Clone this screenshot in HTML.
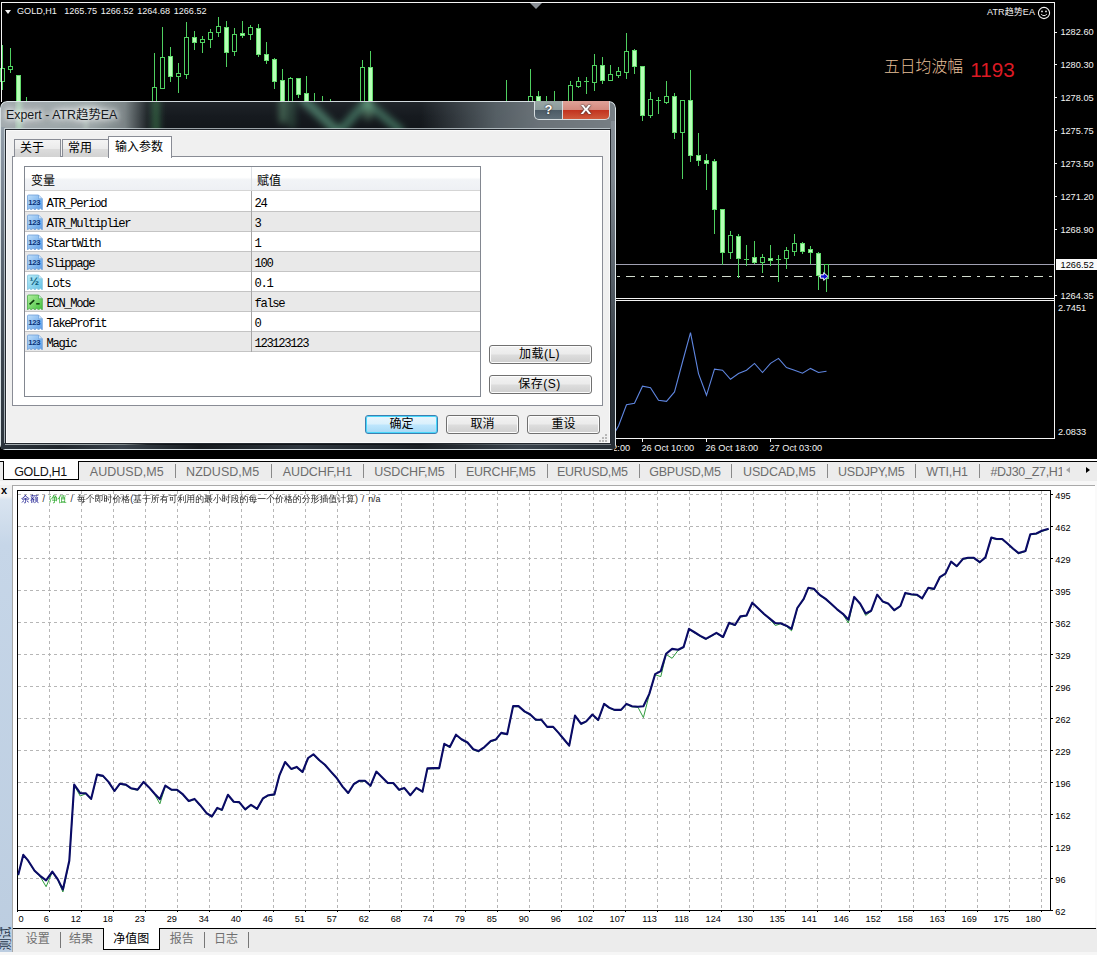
<!DOCTYPE html>
<html lang="zh"><head><meta charset="utf-8"><title>MT4</title>
<style>
html,body{margin:0;padding:0;}
body{width:1097px;height:955px;overflow:hidden;position:relative;background:#fff;
 font-family:"Liberation Sans","Noto Sans CJK SC",sans-serif;font-size:12px;color:#000;}
div,span{box-sizing:border-box;}
#top{position:absolute;left:0;top:0;width:1097px;height:459px;background:#000;overflow:hidden;}
#chart{position:absolute;left:0;top:0;}
#sym{position:absolute;left:17px;top:4.5px;color:#f2f2f2;font-size:9.1px;line-height:12px;white-space:pre;word-spacing:1.1px;}
#sym .tri{position:absolute;left:-12px;top:5px;width:0;height:0;border-left:3.5px solid transparent;border-right:3.5px solid transparent;border-top:4px solid #f2f2f2;}
#eaname{position:absolute;left:987px;top:5.8px;color:#f0f0f0;font-size:9px;line-height:13px;white-space:nowrap;letter-spacing:.1px;}
#smile{position:absolute;left:1036.6px;top:5.7px;}
#toptri{position:absolute;left:530px;top:3px;width:0;height:0;border-left:6px solid transparent;border-right:6px solid transparent;border-top:6px solid #8a8f96;}
#lab5{position:absolute;left:884px;top:56px;font-size:15.8px;line-height:20px;color:#e6bf98;white-space:nowrap;font-family:"Noto Sans CJK SC",sans-serif;font-weight:300;}
#lab1193{position:absolute;left:970.3px;top:57.8px;font-size:20.6px;line-height:24px;color:#dc1a24;white-space:nowrap;}

/* ------------------------------------------------ dialog */
#dlg{position:absolute;left:0;top:101px;width:616px;height:349px;border-radius:7px 7px 5px 5px;background:#20262b;overflow:hidden;}
#dlg .glass{position:absolute;left:0;top:0;width:616px;height:349px;border-radius:7px 7px 5px 5px;border:1px solid rgba(226,234,238,.92);
 background:
  linear-gradient(90deg,rgba(168,176,180,.97) 0px,rgba(162,172,174,.95) 90px,rgba(140,150,152,.85) 124px,rgba(60,70,72,.3) 146px,rgba(40,48,50,0) 166px),
  linear-gradient(90deg,rgba(20,24,28,0) 420px,rgba(92,102,108,.9) 495px,rgba(112,120,126,.95) 540px,rgba(124,132,138,.95) 616px),
  linear-gradient(180deg,#1f2429 0,#161a1f 14px,#12161a 28px,#12161a 349px);}
#dlg .blur{position:absolute;left:0;top:1px;}
#dlg .fl{position:absolute;left:1px;top:26px;width:4px;height:322px;background:linear-gradient(180deg,#95a0aa 0,#8893a0 30px,#5d6874 130px,#3b444e 230px,#2b333b 322px);}
#dlg .fr{position:absolute;left:611px;top:20px;width:4px;height:328px;background:linear-gradient(180deg,#868e96 0,#7d868e 60px,#59626b 150px,#343c44 240px,#262d34 328px);}
#dlg .fb{position:absolute;left:1px;top:344px;width:614px;height:4px;background:linear-gradient(90deg,#2b333b 0,#20262c 60px,#39424b 120px,#161a1e 200px,#2f373f 300px,#1a1f24 420px,#39424b 520px,#262d34 614px);}
#dlg .ttl{position:absolute;left:6px;top:6px;font-size:12.4px;line-height:16px;color:#16191c;white-space:nowrap;
 text-shadow:0 0 5px #fff,0 0 8px #fff,0 0 10px rgba(255,255,255,.9);}
#dlg .cb{position:absolute;top:0;height:19px;border:1px solid #d6dde0;border-top:none;}
#dlg .cb.help{left:534px;width:29px;border-radius:0 0 0 5px;background:linear-gradient(180deg,#9aa8a6 0,#8b9a9b 48%,#4c5b66 52%,#5f6e78 100%);}
#dlg .cb.close span{font-size:13.5px;top:0.5px;transform:scaleX(1.2);}
#dlg .cb.close{left:562px;width:48px;border-radius:0 0 5px 0;background:linear-gradient(180deg,#dfa298 0,#d48a7e 48%,#c2331f 52%,#cf5a3c 100%);}
#dlg .cb span{position:absolute;left:0;right:0;top:1px;text-align:center;color:#fff;font-weight:bold;font-size:13px;line-height:16px;
 text-shadow:0 0 2px #333,0 0 1px #222;}
#dlg .client{position:absolute;left:5px;top:28px;width:606px;height:315px;background:#f0f0f0;border:1px solid #23282e;box-shadow:inset 0 0 0 1px #fafafa,-1px -1px 0 0 rgba(214,224,228,.7);}
.cn{font-family:"Liberation Sans","Noto Sans CJK SC",sans-serif;}
.tabp{position:absolute;left:12px;top:55px;width:591px;height:250px;background:#fff;border:1px solid #898c95;}
.tab{position:absolute;top:38px;height:18px;border:1px solid #898c95;border-bottom:none;background:linear-gradient(180deg,#f4f4f4 0,#ebebeb 50%,#dcdcdc 52%,#d2d2d2 100%);
 font-size:12px;line-height:17px;text-align:left;padding-left:5px;white-space:nowrap;}
.tab.on{top:35px;height:22px;background:#fff;line-height:21px;padding-left:6px;z-index:2;}
.lv{position:absolute;left:24px;top:65px;width:457px;height:231px;background:#fff;border:1px solid #828790;overflow:hidden;}
.lv .hd{position:absolute;left:0;top:0;width:456px;height:24px;background:linear-gradient(180deg,#fff 0,#fff 45%,#f2f4f7 55%,#eef0f4 100%);border-bottom:1px solid #d5d5d5;}
.lv .hd span{position:absolute;top:5.5px;font-size:12px;line-height:16px;}
.lv .hd i{position:absolute;left:226px;top:0;width:1px;height:23px;background:#dcdfe4;}
.lv .row{position:absolute;left:0;width:456px;height:20px;border-bottom:1px solid #c4c4c4;background:#fff;}
.lv .row.g{background:#e9e9e9;}
.lv .row .n,.lv .row .v{position:absolute;top:5.2px;font-family:"Liberation Mono","DejaVu Sans Mono",monospace;font-size:12.2px;line-height:14px;letter-spacing:-1.32px;white-space:pre;color:#000;}
.lv .row .n{left:21.4px;}
.lv .row .v{left:229.4px;}
.lv .row svg{position:absolute;left:2px;top:2px;}
.lv .col{position:absolute;left:226px;top:24px;width:1px;height:161px;background:#a6a6a6;}
.btn{position:absolute;height:19px;border:1px solid #707070;border-radius:3px;background:linear-gradient(180deg,#f2f2f2 0,#ebebeb 48%,#dddddd 52%,#cfcfcf 100%);
 box-shadow:inset 0 0 0 1px #fcfcfc;font-size:12px;line-height:17px;text-align:center;white-space:nowrap;}
.btn.def{border-color:#3c7fb1;box-shadow:inset 0 0 0 1px #48d8fb;background:linear-gradient(180deg,#eaf6fd 0,#d9f0fc 48%,#bee6fd 52%,#a7d9f5 100%);}
.grip{position:absolute;left:598px;top:433px;width:10px;height:10px;}

/* ------------------------------------------------ chart tabs */
#tabs{position:absolute;left:0;top:459px;width:1097px;height:27px;background:#ececec;overflow:hidden;}
#tabs .w{position:absolute;left:0;top:0;width:1097px;height:2px;background:#fff;}
#tabs .bl{position:absolute;left:78px;top:2px;width:1019px;height:1px;background:#000;}
#tabs .bl0{position:absolute;left:0;top:2px;width:4px;height:1px;background:#000;}
#tabs .lo{position:absolute;left:0;top:22px;width:1097px;height:5px;background:#f7f7f7;}
#tabs .act{position:absolute;left:3px;top:2px;width:76px;height:19px;background:#fff;border:1px solid #000;border-top:none;}
#tabs .t{position:absolute;top:6px;font-size:12.5px;line-height:15px;color:#6c6c6c;white-space:nowrap;}
#tabs .t.on{color:#111;}
#tabs .s{position:absolute;top:5px;width:1px;height:14px;background:#8a8a8a;}
#tabs .al{position:absolute;left:1066px;top:7.5px;width:0;height:0;border-top:3.5px solid transparent;border-bottom:3.5px solid transparent;border-right:4px solid #a4a4a4;}
#tabs .ar{position:absolute;left:1085.5px;top:7.5px;width:0;height:0;border-top:3.5px solid transparent;border-bottom:3.5px solid transparent;border-left:4px solid #000;}
#tabs .clip{position:absolute;left:1062px;top:3px;width:35px;height:19px;background:#ececec;}

/* ------------------------------------------------ tester */
#tester{position:absolute;left:0;top:485px;width:1097px;height:470px;background:#fff;overflow:hidden;}
#eq{position:absolute;left:0;top:0;}
#eqtitle{position:absolute;left:21px;top:8px;font-size:8.9px;line-height:12px;white-space:nowrap;color:#222;word-spacing:1.4px;font-family:"Liberation Sans","WenQuanYi Zen Hei","Noto Sans CJK SC",sans-serif;}
#eqtitle .c1{color:#10108a;}
#eqtitle .c2{color:#18a018;}
#lstrip{position:absolute;left:0;top:0;width:13px;height:466.5px;background:linear-gradient(180deg,#f1f1f1 0,#f1f1f1 11px,#d9e4f0 15px,#c6d6e8 60px,#bccde0 470px);border-right:1px solid #a7a7a7;}
#lstrip .x{position:absolute;left:1px;top:0px;font-size:11px;line-height:11px;font-weight:bold;color:#000;font-family:"Liberation Sans",sans-serif;}
#lstrip .vt{position:absolute;left:-10.5px;top:447px;width:32px;height:13px;transform:rotate(-90deg);transform-origin:center;font-size:12px;line-height:13px;color:#26364a;white-space:nowrap;text-align:center;}
#btabs{position:absolute;left:13px;top:443px;width:1084px;height:27px;background:#ececec;}
#btabs .bl{position:absolute;left:0;top:0;width:1083px;height:1px;background:#000;}
#btabs .lo{position:absolute;left:-13px;top:23.5px;width:1097px;height:4px;background:#f6f6f6;}
#btabs .act{position:absolute;left:90px;top:0;width:57px;height:22px;background:#fff;border:1px solid #000;border-top:none;}
#btabs .t{position:absolute;top:4px;font-size:12px;line-height:15px;color:#707070;white-space:nowrap;}
#btabs .t.on{color:#000;}
#btabs .s{position:absolute;top:4px;width:1px;height:16px;background:#777;}
#rstrip{position:absolute;left:1095px;top:0;width:2px;height:443px;background:#fafafa;}

</style></head>
<body>
<div id="top">
<svg id="chart" width="1097" height="459" viewBox="0 0 1097 459" shape-rendering="crispEdges">
<rect x="2" y="264" width="1052" height="1" fill="#a0a0b2"/><line x1="2" y1="276.5" x2="1054" y2="276.5" stroke="#d2dcce" stroke-width="1" stroke-dasharray="9 6 3 6"/>
<g id="candles">
<rect x="2" y="45" width="1" height="23" fill="#4fd060"/><rect x="2" y="81" width="1" height="9" fill="#4fd060"/><rect x="0.5" y="68.5" width="4" height="13" fill="#000" stroke="#4fd060" stroke-width="1"/>
<rect x="10" y="48" width="1" height="18" fill="#4fd060"/><rect x="10" y="69" width="1" height="4" fill="#4fd060"/><rect x="8.5" y="66.5" width="4" height="3" fill="#000" stroke="#4fd060" stroke-width="1"/>
<rect x="18" y="75" width="1" height="55" fill="#4fd060"/><rect x="16.5" y="75.5" width="4" height="55" fill="#b6ffb6" stroke="#62dc6c" stroke-width="1"/>
<rect x="26" y="97" width="1" height="33" fill="#4fd060"/><rect x="154" y="53" width="1" height="34" fill="#4fd060"/><rect x="152.5" y="87.5" width="4" height="43" fill="#000" stroke="#4fd060" stroke-width="1"/>
<rect x="162" y="27" width="1" height="30" fill="#4fd060"/><rect x="162" y="88" width="1" height="1" fill="#4fd060"/><rect x="160.5" y="57.5" width="4" height="31" fill="#000" stroke="#4fd060" stroke-width="1"/>
<rect x="170" y="47" width="1" height="35" fill="#4fd060"/><rect x="168.5" y="56.5" width="4" height="20" fill="#b6ffb6" stroke="#62dc6c" stroke-width="1"/>
<rect x="178" y="63" width="1" height="10" fill="#4fd060"/><rect x="178" y="76" width="1" height="17" fill="#4fd060"/><rect x="176.5" y="73.5" width="4" height="3" fill="#000" stroke="#4fd060" stroke-width="1"/>
<rect x="186" y="22" width="1" height="15" fill="#4fd060"/><rect x="186" y="74" width="1" height="5" fill="#4fd060"/><rect x="184.5" y="37.5" width="4" height="37" fill="#000" stroke="#4fd060" stroke-width="1"/>
<rect x="194" y="31" width="1" height="19" fill="#4fd060"/><rect x="192.5" y="37.5" width="4" height="5" fill="#b6ffb6" stroke="#62dc6c" stroke-width="1"/>
<rect x="202" y="36" width="1" height="3" fill="#4fd060"/><rect x="202" y="42" width="1" height="11" fill="#4fd060"/><rect x="200.5" y="39.5" width="4" height="3" fill="#000" stroke="#4fd060" stroke-width="1"/>
<rect x="210" y="29" width="1" height="3" fill="#4fd060"/><rect x="210" y="39" width="1" height="9" fill="#4fd060"/><rect x="208.5" y="32.5" width="4" height="7" fill="#000" stroke="#4fd060" stroke-width="1"/>
<rect x="218" y="17" width="1" height="9" fill="#4fd060"/><rect x="218" y="32" width="1" height="5" fill="#4fd060"/><rect x="216.5" y="26.5" width="4" height="6" fill="#000" stroke="#4fd060" stroke-width="1"/>
<rect x="226" y="21" width="1" height="46" fill="#4fd060"/><rect x="224.5" y="27.5" width="4" height="25" fill="#b6ffb6" stroke="#62dc6c" stroke-width="1"/>
<rect x="234" y="28" width="1" height="6" fill="#4fd060"/><rect x="234" y="51" width="1" height="5" fill="#4fd060"/><rect x="232.5" y="34.5" width="4" height="17" fill="#000" stroke="#4fd060" stroke-width="1"/>
<rect x="242" y="21" width="1" height="17" fill="#4fd060"/><rect x="240.5" y="33.5" width="4" height="2" fill="#b6ffb6" stroke="#62dc6c" stroke-width="1"/>
<rect x="250" y="25" width="1" height="2" fill="#4fd060"/><rect x="250" y="34" width="1" height="6" fill="#4fd060"/><rect x="248.5" y="27.5" width="4" height="7" fill="#000" stroke="#4fd060" stroke-width="1"/>
<rect x="258" y="24" width="1" height="33" fill="#4fd060"/><rect x="256.5" y="28.5" width="4" height="26" fill="#b6ffb6" stroke="#62dc6c" stroke-width="1"/>
<rect x="266" y="42" width="1" height="22" fill="#4fd060"/><rect x="264.5" y="54.5" width="4" height="6" fill="#b6ffb6" stroke="#62dc6c" stroke-width="1"/>
<rect x="274" y="58" width="1" height="31" fill="#4fd060"/><rect x="272.5" y="59.5" width="4" height="22" fill="#b6ffb6" stroke="#62dc6c" stroke-width="1"/>
<rect x="282" y="69" width="1" height="61" fill="#4fd060"/><rect x="280.5" y="80.5" width="4" height="50" fill="#b6ffb6" stroke="#62dc6c" stroke-width="1"/>
<rect x="290" y="77" width="1" height="1" fill="#4fd060"/><rect x="288.5" y="78.5" width="4" height="52" fill="#000" stroke="#4fd060" stroke-width="1"/>
<rect x="298" y="78" width="1" height="20" fill="#4fd060"/><rect x="296.5" y="78.5" width="4" height="16" fill="#b6ffb6" stroke="#62dc6c" stroke-width="1"/>
<rect x="306" y="76" width="1" height="54" fill="#4fd060"/><rect x="304.5" y="93.5" width="4" height="37" fill="#b6ffb6" stroke="#62dc6c" stroke-width="1"/>
<rect x="314" y="93" width="1" height="37" fill="#4fd060"/><rect x="322" y="96" width="1" height="34" fill="#4fd060"/><rect x="330" y="99" width="1" height="31" fill="#4fd060"/><rect x="362" y="60" width="1" height="7" fill="#4fd060"/><rect x="360.5" y="67.5" width="4" height="63" fill="#000" stroke="#4fd060" stroke-width="1"/>
<rect x="370" y="51" width="1" height="79" fill="#4fd060"/><rect x="368.5" y="67.5" width="4" height="63" fill="#b6ffb6" stroke="#62dc6c" stroke-width="1"/>
<rect x="506" y="80" width="1" height="50" fill="#4fd060"/><rect x="530" y="69" width="1" height="27" fill="#4fd060"/><rect x="528.5" y="96.5" width="4" height="34" fill="#000" stroke="#4fd060" stroke-width="1"/>
<rect x="538" y="91" width="1" height="39" fill="#4fd060"/><rect x="536.5" y="96.5" width="4" height="34" fill="#b6ffb6" stroke="#62dc6c" stroke-width="1"/>
<rect x="546" y="96" width="1" height="34" fill="#4fd060"/><rect x="554" y="91" width="1" height="39" fill="#4fd060"/><rect x="570" y="81" width="1" height="4" fill="#4fd060"/><rect x="568.5" y="85.5" width="4" height="45" fill="#000" stroke="#4fd060" stroke-width="1"/>
<rect x="578" y="77" width="1" height="4" fill="#4fd060"/><rect x="578" y="86" width="1" height="2" fill="#4fd060"/><rect x="576.5" y="81.5" width="4" height="5" fill="#000" stroke="#4fd060" stroke-width="1"/>
<rect x="586" y="77" width="1" height="17" fill="#4fd060"/><rect x="584" y="81" width="5" height="1" fill="#4fd060"/>
<rect x="594" y="54" width="1" height="11" fill="#4fd060"/><rect x="594" y="82" width="1" height="9" fill="#4fd060"/><rect x="592.5" y="65.5" width="4" height="17" fill="#000" stroke="#4fd060" stroke-width="1"/>
<rect x="602" y="57" width="1" height="27" fill="#4fd060"/><rect x="600.5" y="65.5" width="4" height="15" fill="#b6ffb6" stroke="#62dc6c" stroke-width="1"/>
<rect x="610" y="65" width="1" height="9" fill="#4fd060"/><rect x="610" y="80" width="1" height="1" fill="#4fd060"/><rect x="608.5" y="74.5" width="4" height="6" fill="#000" stroke="#4fd060" stroke-width="1"/>
<rect x="618" y="67" width="1" height="4" fill="#4fd060"/><rect x="618" y="75" width="1" height="3" fill="#4fd060"/><rect x="616.5" y="71.5" width="4" height="4" fill="#000" stroke="#4fd060" stroke-width="1"/>
<rect x="626" y="33" width="1" height="18" fill="#4fd060"/><rect x="626" y="72" width="1" height="7" fill="#4fd060"/><rect x="624.5" y="51.5" width="4" height="21" fill="#000" stroke="#4fd060" stroke-width="1"/>
<rect x="634" y="49" width="1" height="25" fill="#4fd060"/><rect x="632.5" y="50.5" width="4" height="16" fill="#b6ffb6" stroke="#62dc6c" stroke-width="1"/>
<rect x="642" y="66" width="1" height="55" fill="#4fd060"/><rect x="640.5" y="66.5" width="4" height="49" fill="#b6ffb6" stroke="#62dc6c" stroke-width="1"/>
<rect x="650" y="92" width="1" height="7" fill="#4fd060"/><rect x="650" y="115" width="1" height="3" fill="#4fd060"/><rect x="648.5" y="99.5" width="4" height="16" fill="#000" stroke="#4fd060" stroke-width="1"/>
<rect x="658" y="97" width="1" height="17" fill="#4fd060"/><rect x="656" y="100" width="5" height="1" fill="#4fd060"/>
<rect x="666" y="81" width="1" height="15" fill="#4fd060"/><rect x="666" y="102" width="1" height="2" fill="#4fd060"/><rect x="664.5" y="96.5" width="4" height="6" fill="#000" stroke="#4fd060" stroke-width="1"/>
<rect x="674" y="93" width="1" height="46" fill="#4fd060"/><rect x="672.5" y="96.5" width="4" height="36" fill="#b6ffb6" stroke="#62dc6c" stroke-width="1"/>
<rect x="682" y="132" width="1" height="47" fill="#4fd060"/><rect x="680.5" y="100.5" width="4" height="32" fill="#000" stroke="#4fd060" stroke-width="1"/>
<rect x="690" y="70" width="1" height="92" fill="#4fd060"/><rect x="688.5" y="100.5" width="4" height="55" fill="#b6ffb6" stroke="#62dc6c" stroke-width="1"/>
<rect x="698" y="133" width="1" height="33" fill="#4fd060"/><rect x="696.5" y="155.5" width="4" height="5" fill="#b6ffb6" stroke="#62dc6c" stroke-width="1"/>
<rect x="706" y="154" width="1" height="36" fill="#4fd060"/><rect x="704.5" y="160.5" width="4" height="3" fill="#b6ffb6" stroke="#62dc6c" stroke-width="1"/>
<rect x="714" y="159" width="1" height="75" fill="#4fd060"/><rect x="712.5" y="161.5" width="4" height="48" fill="#b6ffb6" stroke="#62dc6c" stroke-width="1"/>
<rect x="722" y="209" width="1" height="56" fill="#4fd060"/><rect x="720.5" y="209.5" width="4" height="43" fill="#b6ffb6" stroke="#62dc6c" stroke-width="1"/>
<rect x="730" y="231" width="1" height="4" fill="#4fd060"/><rect x="730" y="252" width="1" height="7" fill="#4fd060"/><rect x="728.5" y="235.5" width="4" height="17" fill="#000" stroke="#4fd060" stroke-width="1"/>
<rect x="738" y="234" width="1" height="44" fill="#4fd060"/><rect x="736.5" y="236.5" width="4" height="22" fill="#b6ffb6" stroke="#62dc6c" stroke-width="1"/>
<rect x="746" y="245" width="1" height="21" fill="#4fd060"/><rect x="744" y="259" width="5" height="1" fill="#4fd060"/>
<rect x="754" y="241" width="1" height="23" fill="#4fd060"/><rect x="752.5" y="257.5" width="4" height="5" fill="#b6ffb6" stroke="#62dc6c" stroke-width="1"/>
<rect x="762" y="254" width="1" height="3" fill="#4fd060"/><rect x="762" y="262" width="1" height="11" fill="#4fd060"/><rect x="760.5" y="257.5" width="4" height="5" fill="#000" stroke="#4fd060" stroke-width="1"/>
<rect x="770" y="245" width="1" height="21" fill="#4fd060"/><rect x="768.5" y="258.5" width="4" height="2" fill="#b6ffb6" stroke="#62dc6c" stroke-width="1"/>
<rect x="778" y="255" width="1" height="27" fill="#4fd060"/><rect x="776" y="259" width="5" height="1" fill="#4fd060"/>
<rect x="786" y="247" width="1" height="3" fill="#4fd060"/><rect x="786" y="258" width="1" height="11" fill="#4fd060"/><rect x="784.5" y="250.5" width="4" height="8" fill="#000" stroke="#4fd060" stroke-width="1"/>
<rect x="794" y="234" width="1" height="9" fill="#4fd060"/><rect x="794" y="251" width="1" height="5" fill="#4fd060"/><rect x="792.5" y="243.5" width="4" height="8" fill="#000" stroke="#4fd060" stroke-width="1"/>
<rect x="802" y="242" width="1" height="12" fill="#4fd060"/><rect x="800.5" y="243.5" width="4" height="8" fill="#b6ffb6" stroke="#62dc6c" stroke-width="1"/>
<rect x="810" y="246" width="1" height="18" fill="#4fd060"/><rect x="808.5" y="249.5" width="4" height="3" fill="#b6ffb6" stroke="#62dc6c" stroke-width="1"/>
<rect x="818" y="252" width="1" height="38" fill="#4fd060"/><rect x="816.5" y="253.5" width="4" height="22" fill="#b6ffb6" stroke="#62dc6c" stroke-width="1"/>
<rect x="826" y="278" width="1" height="14" fill="#4fd060"/><rect x="824.5" y="264.5" width="4" height="14" fill="#000" stroke="#4fd060" stroke-width="1"/>
</g>
<rect x="1" y="2" width="1054" height="1" fill="#f4f4f4"/><rect x="1" y="2" width="1" height="100" fill="#f4f4f4"/><rect x="1054" y="2" width="1" height="437" fill="#f4f4f4"/><rect x="1" y="298" width="1054" height="1" fill="#f4f4f4"/><rect x="1" y="300" width="1054" height="1" fill="#f4f4f4"/><rect x="1" y="438" width="1054" height="1" fill="#f4f4f4"/>
<g shape-rendering="geometricPrecision"><path d="M820.3 274.8 h3.4 v-2.2 l4.4 3.9 -4.4 3.9 v-2.2 h-3.4z" fill="#1010d0" stroke="#fff" stroke-width="1"/></g>
<polyline points="610.5,440 618.5,426 626.5,404.8 634.5,403.2 642.5,386.2 650.5,387.8 658.5,400.3 666.5,401.4 674.5,391.9 682.5,362 690.5,332.6 698.5,373.6 706.5,395.3 714.5,369.1 722.5,370.2 730.5,379.3 738.5,373.6 746.5,370.2 754.5,363.4 762.5,372.5 770.5,363.4 778.5,358.4 786.5,367.5 794.5,370.2 802.5,373.2 810.5,368.4 818.5,372.5 826.5,371.3" fill="none" stroke="#5f86e0" stroke-width="1.1" shape-rendering="geometricPrecision"/>
<g font-family="Liberation Sans, Arial, sans-serif" font-size="9.2px" fill="#f4f4f4" shape-rendering="geometricPrecision">
<rect x="1055" y="32" width="2" height="1" fill="#f4f4f4" shape-rendering="crispEdges"/><text x="1060.4" y="35.3">1282.60</text>
<rect x="1055" y="64" width="2" height="1" fill="#f4f4f4" shape-rendering="crispEdges"/><text x="1060.4" y="68.2">1280.30</text>
<rect x="1055" y="97" width="2" height="1" fill="#f4f4f4" shape-rendering="crispEdges"/><text x="1060.4" y="101.2">1278.05</text>
<rect x="1055" y="130" width="2" height="1" fill="#f4f4f4" shape-rendering="crispEdges"/><text x="1060.4" y="134.10000000000002">1275.75</text>
<rect x="1055" y="163" width="2" height="1" fill="#f4f4f4" shape-rendering="crispEdges"/><text x="1060.4" y="167.0">1273.50</text>
<rect x="1055" y="196" width="2" height="1" fill="#f4f4f4" shape-rendering="crispEdges"/><text x="1060.4" y="200.0">1271.20</text>
<rect x="1055" y="229" width="2" height="1" fill="#f4f4f4" shape-rendering="crispEdges"/><text x="1060.4" y="232.9">1268.90</text>
<rect x="1055" y="295" width="2" height="1" fill="#f4f4f4" shape-rendering="crispEdges"/><text x="1060.4" y="298.6">1264.35</text>
<rect x="1056" y="259" width="41" height="11" fill="#fafafa" shape-rendering="crispEdges"/><text x="1060.6" y="268.3" fill="#000">1266.52</text>
<text x="1058" y="311">2.7451</text>
<text x="1058" y="434.5">2.0833</text>
<defs><clipPath id="cpt"><rect x="614" y="440" width="40" height="16"/></clipPath></defs><rect x="578" y="439" width="1" height="3" fill="#f4f4f4" shape-rendering="crispEdges"/><text x="577.5" y="450.8" clip-path="url(#cpt)">26 Oct 02:00</text>
<rect x="642" y="439" width="1" height="3" fill="#f4f4f4" shape-rendering="crispEdges"/><text x="641.5" y="450.8">26 Oct 10:00</text>
<rect x="706" y="439" width="1" height="3" fill="#f4f4f4" shape-rendering="crispEdges"/><text x="705.5" y="450.8">26 Oct 18:00</text>
<rect x="770" y="439" width="1" height="3" fill="#f4f4f4" shape-rendering="crispEdges"/><text x="769.5" y="450.8">27 Oct 03:00</text>
</g>
</svg>
<div id="sym"><span class="tri"></span>GOLD,H1&nbsp; 1265.75 1266.52 1264.68 1266.52</div>
<div id="eaname">ATR趋势EA</div>
<svg id="smile" width="14" height="14" viewBox="0 0 14 14"><circle cx="7" cy="7" r="5.6" fill="none" stroke="#f0f0f0" stroke-width="1.1"/><circle cx="5" cy="5.4" r="0.9" fill="#f0f0f0"/><circle cx="9" cy="5.4" r="0.9" fill="#f0f0f0"/><path d="M4.2 8.2 Q7 11.2 9.8 8.2" fill="none" stroke="#f0f0f0" stroke-width="1"/></svg>
<div id="toptri"></div>
<div id="lab5">五日均波幅</div><div id="lab1193">1193</div>
</div>
<div id="dlg">
<div class="glass"></div><svg class="blur" width="616" height="27" viewBox="0 0 616 27"><defs><filter id="fbl1" x="-5%" y="-60%" width="110%" height="220%"><feGaussianBlur stdDeviation="3.6"/></filter><filter id="fbl2" x="-5%" y="-60%" width="110%" height="220%"><feGaussianBlur stdDeviation="2"/></filter></defs>
<g filter="url(#fbl1)" fill="none" stroke-linecap="round">
<path d="M156 -2 V30" stroke="#58c870" stroke-width="5" opacity=".5"/>
<path d="M283 -3 V18" stroke="#8ee0a8" stroke-width="7" opacity=".4"/>
<path d="M292 -3 V24" stroke="#60b888" stroke-width="5" opacity=".35"/>
<path d="M304 -2 L336 28" stroke="#7ad0a8" stroke-width="9" opacity=".5"/>
<path d="M342 27 L366 0 L400 28" stroke="#6cc49c" stroke-width="8" opacity=".48"/>
<path d="M368 -3 V14" stroke="#a0f0b8" stroke-width="8" opacity=".35"/>
</g>
<g filter="url(#fbl2)" fill="none"><path d="M19 -2 V30" stroke="#c8ffd0" stroke-width="5" opacity=".55"/><path d="M86 4 V30" stroke="#d8f0dc" stroke-width="4" opacity=".35"/></g>
</svg><div class="fl"></div><div class="fr"></div><div class="fb"></div>
<div class="ttl">Expert - ATR趋势EA</div>
<div class="cb help"><span>?</span></div><div class="cb close"><span>X</span></div>
<div class="client"></div>
<div class="tabp"></div>
<div class="tab" style="left:14px;width:47px">关于</div><div class="tab" style="left:62px;width:47px">常用</div><div class="tab on" style="left:108px;width:64px">输入参数</div>
<div class="lv">
<div class="hd"><span style="left:6px">变量</span><i></i><span style="left:232px">赋值</span></div>
<div class="row" style="top:25px"><svg width="16" height="16" viewBox="0 0 16 16"><defs><linearGradient id="gn1" x1="0" y1="0" x2="1" y2="1"><stop offset="0" stop-color="#bfe0fb"/><stop offset="1" stop-color="#5a9be6"/></linearGradient></defs><path d="M0.5 2 Q0.5 1 1.5 1 H11.5 L15.3 4.8 V15.8 L13.4 14.3 L11.6 15.8 L9.7 14.3 L7.9 15.8 L6 14.3 L4.2 15.8 L2.4 14.3 L0.5 15.8 Z" fill="url(#gn1)" stroke="#6f9fd8" stroke-width="0.8"/><path d="M11.5 1 V4.8 H15.3" fill="#e8f4ff" fill-opacity=".7" stroke="#6f9fd8" stroke-width="0.7"/><text x="7.2" y="11.2" font-family="Liberation Sans,sans-serif" font-size="7.8" font-weight="bold" fill="#0c3478" text-anchor="middle" letter-spacing="-0.4">123</text></svg><span class="n">ATR_Period</span><span class="v">24</span></div>
<div class="row g" style="top:45px"><svg width="16" height="16" viewBox="0 0 16 16"><defs><linearGradient id="gn2" x1="0" y1="0" x2="1" y2="1"><stop offset="0" stop-color="#bfe0fb"/><stop offset="1" stop-color="#5a9be6"/></linearGradient></defs><path d="M0.5 2 Q0.5 1 1.5 1 H11.5 L15.3 4.8 V15.8 L13.4 14.3 L11.6 15.8 L9.7 14.3 L7.9 15.8 L6 14.3 L4.2 15.8 L2.4 14.3 L0.5 15.8 Z" fill="url(#gn2)" stroke="#6f9fd8" stroke-width="0.8"/><path d="M11.5 1 V4.8 H15.3" fill="#e8f4ff" fill-opacity=".7" stroke="#6f9fd8" stroke-width="0.7"/><text x="7.2" y="11.2" font-family="Liberation Sans,sans-serif" font-size="7.8" font-weight="bold" fill="#0c3478" text-anchor="middle" letter-spacing="-0.4">123</text></svg><span class="n">ATR_Multiplier</span><span class="v">3</span></div>
<div class="row" style="top:65px"><svg width="16" height="16" viewBox="0 0 16 16"><defs><linearGradient id="gn3" x1="0" y1="0" x2="1" y2="1"><stop offset="0" stop-color="#bfe0fb"/><stop offset="1" stop-color="#5a9be6"/></linearGradient></defs><path d="M0.5 2 Q0.5 1 1.5 1 H11.5 L15.3 4.8 V15.8 L13.4 14.3 L11.6 15.8 L9.7 14.3 L7.9 15.8 L6 14.3 L4.2 15.8 L2.4 14.3 L0.5 15.8 Z" fill="url(#gn3)" stroke="#6f9fd8" stroke-width="0.8"/><path d="M11.5 1 V4.8 H15.3" fill="#e8f4ff" fill-opacity=".7" stroke="#6f9fd8" stroke-width="0.7"/><text x="7.2" y="11.2" font-family="Liberation Sans,sans-serif" font-size="7.8" font-weight="bold" fill="#0c3478" text-anchor="middle" letter-spacing="-0.4">123</text></svg><span class="n">StartWith</span><span class="v">1</span></div>
<div class="row g" style="top:85px"><svg width="16" height="16" viewBox="0 0 16 16"><defs><linearGradient id="gn4" x1="0" y1="0" x2="1" y2="1"><stop offset="0" stop-color="#bfe0fb"/><stop offset="1" stop-color="#5a9be6"/></linearGradient></defs><path d="M0.5 2 Q0.5 1 1.5 1 H11.5 L15.3 4.8 V15.8 L13.4 14.3 L11.6 15.8 L9.7 14.3 L7.9 15.8 L6 14.3 L4.2 15.8 L2.4 14.3 L0.5 15.8 Z" fill="url(#gn4)" stroke="#6f9fd8" stroke-width="0.8"/><path d="M11.5 1 V4.8 H15.3" fill="#e8f4ff" fill-opacity=".7" stroke="#6f9fd8" stroke-width="0.7"/><text x="7.2" y="11.2" font-family="Liberation Sans,sans-serif" font-size="7.8" font-weight="bold" fill="#0c3478" text-anchor="middle" letter-spacing="-0.4">123</text></svg><span class="n">Slippage</span><span class="v">100</span></div>
<div class="row" style="top:105px"><svg width="16" height="16" viewBox="0 0 16 16"><defs><linearGradient id="gd" x1="0" y1="0" x2="1" y2="1"><stop offset="0" stop-color="#b8ecf8"/><stop offset="1" stop-color="#62c0e4"/></linearGradient></defs><path d="M0.5 2 Q0.5 1 1.5 1 H11.5 L15.3 4.8 V15.8 L13.4 14.3 L11.6 15.8 L9.7 14.3 L7.9 15.8 L6 14.3 L4.2 15.8 L2.4 14.3 L0.5 15.8 Z" fill="url(#gd)" stroke="#7fc0dc" stroke-width="0.8"/><path d="M11.5 1 V4.8 H15.3" fill="#e8f4ff" fill-opacity=".7" stroke="#7fc0dc" stroke-width="0.7"/><text x="7.4" y="10.6" font-family="Liberation Sans,sans-serif" font-size="11.5" font-weight="bold" fill="#0d5c7c" text-anchor="middle">½</text></svg><span class="n">Lots</span><span class="v">0.1</span></div>
<div class="row g" style="top:125px"><svg width="16" height="16" viewBox="0 0 16 16"><defs><linearGradient id="gbool" x1="0" y1="0" x2="1" y2="1"><stop offset="0" stop-color="#b4f0a0"/><stop offset="1" stop-color="#3fbf3a"/></linearGradient></defs><path d="M0.5 2 Q0.5 1 1.5 1 H11.5 L15.3 4.8 V15.8 L13.4 14.3 L11.6 15.8 L9.7 14.3 L7.9 15.8 L6 14.3 L4.2 15.8 L2.4 14.3 L0.5 15.8 Z" fill="url(#gbool)" stroke="#48a848" stroke-width="0.8"/><path d="M11.5 1 V4.8 H15.3" fill="#e8f4ff" fill-opacity=".7" stroke="#48a848" stroke-width="0.7"/><path d="M2.6 10.4 L7.2 6.2" fill="none" stroke="#0c3a0c" stroke-width="1.7"/><path d="M9.2 9.8 H12.6" fill="none" stroke="#0c3a0c" stroke-width="1.5"/></svg><span class="n">ECN_Mode</span><span class="v">false</span></div>
<div class="row" style="top:145px"><svg width="16" height="16" viewBox="0 0 16 16"><defs><linearGradient id="gn5" x1="0" y1="0" x2="1" y2="1"><stop offset="0" stop-color="#bfe0fb"/><stop offset="1" stop-color="#5a9be6"/></linearGradient></defs><path d="M0.5 2 Q0.5 1 1.5 1 H11.5 L15.3 4.8 V15.8 L13.4 14.3 L11.6 15.8 L9.7 14.3 L7.9 15.8 L6 14.3 L4.2 15.8 L2.4 14.3 L0.5 15.8 Z" fill="url(#gn5)" stroke="#6f9fd8" stroke-width="0.8"/><path d="M11.5 1 V4.8 H15.3" fill="#e8f4ff" fill-opacity=".7" stroke="#6f9fd8" stroke-width="0.7"/><text x="7.2" y="11.2" font-family="Liberation Sans,sans-serif" font-size="7.8" font-weight="bold" fill="#0c3478" text-anchor="middle" letter-spacing="-0.4">123</text></svg><span class="n">TakeProfit</span><span class="v">0</span></div>
<div class="row g" style="top:165px"><svg width="16" height="16" viewBox="0 0 16 16"><defs><linearGradient id="gn6" x1="0" y1="0" x2="1" y2="1"><stop offset="0" stop-color="#bfe0fb"/><stop offset="1" stop-color="#5a9be6"/></linearGradient></defs><path d="M0.5 2 Q0.5 1 1.5 1 H11.5 L15.3 4.8 V15.8 L13.4 14.3 L11.6 15.8 L9.7 14.3 L7.9 15.8 L6 14.3 L4.2 15.8 L2.4 14.3 L0.5 15.8 Z" fill="url(#gn6)" stroke="#6f9fd8" stroke-width="0.8"/><path d="M11.5 1 V4.8 H15.3" fill="#e8f4ff" fill-opacity=".7" stroke="#6f9fd8" stroke-width="0.7"/><text x="7.2" y="11.2" font-family="Liberation Sans,sans-serif" font-size="7.8" font-weight="bold" fill="#0c3478" text-anchor="middle" letter-spacing="-0.4">123</text></svg><span class="n">Magic</span><span class="v">123123123</span></div>
<div class="col"></div>
</div>
<div class="btn" style="left:489px;top:244px;width:103px;letter-spacing:.5px;text-indent:-2px">加载(L)</div>
<div class="btn" style="left:489px;top:274px;width:103px;letter-spacing:.5px;text-indent:-2px">保存(S)</div>
<div class="btn def" style="left:365px;top:314px;width:73px">确定</div>
<div class="btn" style="left:446px;top:314px;width:73px">取消</div>
<div class="btn" style="left:527px;top:314px;width:73px">重设</div>
<svg class="grip" style="top:332px" width="10" height="10" viewBox="0 0 10 10"><g fill="#b8b8b8"><rect x="7" y="1" width="2" height="2"/><rect x="4" y="4" width="2" height="2"/><rect x="7" y="4" width="2" height="2"/><rect x="1" y="7" width="2" height="2"/><rect x="4" y="7" width="2" height="2"/><rect x="7" y="7" width="2" height="2"/></g></svg>
</div>
<div id="tabs">
<div class="w"></div><div class="lo"></div><div class="bl0"></div><div class="bl"></div><div class="act"></div>
<div class="t on" style="left:14.2px;letter-spacing:-0.30px">GOLD,H1</div><div class="t" style="left:89.8px;letter-spacing:0.03px">AUDUSD,M5</div><div class="t" style="left:186.1px;letter-spacing:0.03px">NZDUSD,M5</div><div class="t" style="left:282.7px;letter-spacing:-0.08px">AUDCHF,H1</div><div class="t" style="left:374.2px;letter-spacing:-0.13px">USDCHF,M5</div><div class="t" style="left:465.9px;letter-spacing:-0.22px">EURCHF,M5</div><div class="t" style="left:557.0px;letter-spacing:-0.32px">EURUSD,M5</div><div class="t" style="left:649.3px;letter-spacing:-0.26px">GBPUSD,M5</div><div class="t" style="left:743.0px;letter-spacing:-0.13px">USDCAD,M5</div><div class="t" style="left:838.0px;letter-spacing:-0.24px">USDJPY,M5</div><div class="t" style="left:926.3px;letter-spacing:-0.13px">WTI,H1</div><div class="t" style="left:990.4px;letter-spacing:-0.3px">#DJ30_Z7,H1</div>
<div class="s" style="left:175px"></div><div class="s" style="left:271px"></div><div class="s" style="left:363px"></div><div class="s" style="left:455px"></div><div class="s" style="left:547px"></div><div class="s" style="left:639px"></div><div class="s" style="left:731px"></div><div class="s" style="left:827px"></div><div class="s" style="left:915px"></div><div class="s" style="left:979px"></div>
<div class="clip"></div><div class="al"></div><div class="ar"></div>
</div>
<div id="tester">
<svg id="eq" width="1097" height="470" viewBox="0 485 1097 470" shape-rendering="crispEdges">
<rect x="13" y="485" width="1083" height="1" fill="#a9a9a9"/><rect x="13" y="486" width="1084" height="443" fill="#fff"/><g stroke="#b6b6b6" stroke-width="1" stroke-dasharray="3 3">
<line x1="49.5" y1="491" x2="49.5" y2="910"/><line x1="81.5" y1="491" x2="81.5" y2="910"/><line x1="113.5" y1="491" x2="113.5" y2="910"/><line x1="145.5" y1="491" x2="145.5" y2="910"/><line x1="177.5" y1="491" x2="177.5" y2="910"/><line x1="209.5" y1="491" x2="209.5" y2="910"/><line x1="241.5" y1="491" x2="241.5" y2="910"/><line x1="273.5" y1="491" x2="273.5" y2="910"/><line x1="305.5" y1="491" x2="305.5" y2="910"/><line x1="337.5" y1="491" x2="337.5" y2="910"/><line x1="369.5" y1="491" x2="369.5" y2="910"/><line x1="401.5" y1="491" x2="401.5" y2="910"/><line x1="433.5" y1="491" x2="433.5" y2="910"/><line x1="465.5" y1="491" x2="465.5" y2="910"/><line x1="497.5" y1="491" x2="497.5" y2="910"/><line x1="529.5" y1="491" x2="529.5" y2="910"/><line x1="561.5" y1="491" x2="561.5" y2="910"/><line x1="593.5" y1="491" x2="593.5" y2="910"/><line x1="625.5" y1="491" x2="625.5" y2="910"/><line x1="657.5" y1="491" x2="657.5" y2="910"/><line x1="689.5" y1="491" x2="689.5" y2="910"/><line x1="721.5" y1="491" x2="721.5" y2="910"/><line x1="753.5" y1="491" x2="753.5" y2="910"/><line x1="785.5" y1="491" x2="785.5" y2="910"/><line x1="817.5" y1="491" x2="817.5" y2="910"/><line x1="849.5" y1="491" x2="849.5" y2="910"/><line x1="881.5" y1="491" x2="881.5" y2="910"/><line x1="913.5" y1="491" x2="913.5" y2="910"/><line x1="945.5" y1="491" x2="945.5" y2="910"/><line x1="977.5" y1="491" x2="977.5" y2="910"/><line x1="1009.5" y1="491" x2="1009.5" y2="910"/><line x1="1041.5" y1="491" x2="1041.5" y2="910"/>
<line x1="18" y1="494.5" x2="1050" y2="494.5"/><line x1="18" y1="526.5" x2="1050" y2="526.5"/><line x1="18" y1="558.5" x2="1050" y2="558.5"/><line x1="18" y1="590.5" x2="1050" y2="590.5"/><line x1="18" y1="622.5" x2="1050" y2="622.5"/><line x1="18" y1="654.5" x2="1050" y2="654.5"/><line x1="18" y1="686.5" x2="1050" y2="686.5"/><line x1="18" y1="718.5" x2="1050" y2="718.5"/><line x1="18" y1="750.5" x2="1050" y2="750.5"/><line x1="18" y1="782.5" x2="1050" y2="782.5"/><line x1="18" y1="814.5" x2="1050" y2="814.5"/><line x1="18" y1="846.5" x2="1050" y2="846.5"/><line x1="18" y1="878.5" x2="1050" y2="878.5"/>
</g>
<rect x="17.5" y="490.5" width="1033" height="420" fill="none" stroke="#000" stroke-width="1"/>
<rect x="1051" y="494" width="2" height="1" fill="#000"/><rect x="1051" y="526" width="2" height="1" fill="#000"/><rect x="1051" y="558" width="2" height="1" fill="#000"/><rect x="1051" y="590" width="2" height="1" fill="#000"/><rect x="1051" y="622" width="2" height="1" fill="#000"/><rect x="1051" y="654" width="2" height="1" fill="#000"/><rect x="1051" y="686" width="2" height="1" fill="#000"/><rect x="1051" y="718" width="2" height="1" fill="#000"/><rect x="1051" y="750" width="2" height="1" fill="#000"/><rect x="1051" y="782" width="2" height="1" fill="#000"/><rect x="1051" y="814" width="2" height="1" fill="#000"/><rect x="1051" y="846" width="2" height="1" fill="#000"/><rect x="1051" y="878" width="2" height="1" fill="#000"/><rect x="1051" y="910" width="2" height="1" fill="#000"/><rect x="17" y="911" width="1" height="1" fill="#000"/><rect x="49" y="911" width="1" height="1" fill="#000"/><rect x="81" y="911" width="1" height="1" fill="#000"/><rect x="113" y="911" width="1" height="1" fill="#000"/><rect x="145" y="911" width="1" height="1" fill="#000"/><rect x="177" y="911" width="1" height="1" fill="#000"/><rect x="209" y="911" width="1" height="1" fill="#000"/><rect x="241" y="911" width="1" height="1" fill="#000"/><rect x="273" y="911" width="1" height="1" fill="#000"/><rect x="305" y="911" width="1" height="1" fill="#000"/><rect x="337" y="911" width="1" height="1" fill="#000"/><rect x="369" y="911" width="1" height="1" fill="#000"/><rect x="401" y="911" width="1" height="1" fill="#000"/><rect x="433" y="911" width="1" height="1" fill="#000"/><rect x="465" y="911" width="1" height="1" fill="#000"/><rect x="497" y="911" width="1" height="1" fill="#000"/><rect x="529" y="911" width="1" height="1" fill="#000"/><rect x="561" y="911" width="1" height="1" fill="#000"/><rect x="593" y="911" width="1" height="1" fill="#000"/><rect x="625" y="911" width="1" height="1" fill="#000"/><rect x="657" y="911" width="1" height="1" fill="#000"/><rect x="689" y="911" width="1" height="1" fill="#000"/><rect x="721" y="911" width="1" height="1" fill="#000"/><rect x="753" y="911" width="1" height="1" fill="#000"/><rect x="785" y="911" width="1" height="1" fill="#000"/><rect x="817" y="911" width="1" height="1" fill="#000"/><rect x="849" y="911" width="1" height="1" fill="#000"/><rect x="881" y="911" width="1" height="1" fill="#000"/><rect x="913" y="911" width="1" height="1" fill="#000"/><rect x="945" y="911" width="1" height="1" fill="#000"/><rect x="977" y="911" width="1" height="1" fill="#000"/><rect x="1009" y="911" width="1" height="1" fill="#000"/><rect x="1041" y="911" width="1" height="1" fill="#000"/>
<polyline points="18.2,875.5 23.3,855.4 28.2,861.3000000000001 34.6,871.3000000000001 40.1,876.4 46.1,886.7 52.3,872.2 57.8,880.0 62.9,892 69.3,861.3000000000001 74.2,785.2 80.2,796 85.7,793.8000000000001 91.1,799.5 97.1,775.2 103,776.5 108.5,782.5 114.5,791.6 119.9,784.3000000000001 125.8,785.2 131.2,788.9 137.6,790.2 143.6,782.5 149.1,788.0 154.6,794.4 159.9,803.8 165.3,786.2 171.4,790.2 176.8,790.3000000000001 182.3,794.4 188.7,801.6 194.5,799.5 200.2,805.8000000000001 206.6,813.7 211.9,817.1 217.3,808.5 221.9,810.5 227.9,795.4 233.7,802.3000000000001 239.2,802.7 245.2,810.0 251,805.4 257.1,809.4 262.9,799.0 268.4,795.8000000000001 274.4,795.0 279.3,776.3000000000001 285.1,762.6 291.2,769.5 296.6,767.5 302.5,772.6 308.1,758.6 313.4,754.9 319.4,760.8000000000001 324.9,765.3000000000001 330.9,772.2 336.7,778.6 342.6,787.2 348.2,793.6 353.7,784.8000000000001 359,781.4 365,781.4 370.5,786.3000000000001 376.3,772.2 382.3,778.1 387.8,783.6 393.3,783.6 399.1,790.4 404.2,788.5 410.4,795.8000000000001 416.4,788.5 422.5,792.2 427.4,769.0 433.8,768.7 439.2,768.7 444.3,744.4 449.8,747.5 456,735.3000000000001 461.5,739.9 467.5,743.1 473.3,749.9 478.4,751.7 484.4,747.7 490.8,741.7 495.7,740.2 501.2,733.5 507.2,734.7 513.1,706.7 518.5,706.7 524.5,712.0 530,714.9 535.8,720.3000000000001 541.3,720.3000000000001 547.2,727.5 553.2,727.5 558.6,733.5 563.9,739.8000000000001 569.2,746.2 575,716.2 581.1,724.4 586.2,722.0 592.4,715.1 598.2,720.6 604.1,704.5 609.2,708.2 614.6,710.5 621,710.5 626.5,704.5 632,706.9 638,707.3000000000001 643.4,717.6 649.3,694.5 655.1,674.8000000000001 660.8,676.6 666.1,654.4 672.1,658.3 678.1,650.4 683.6,647.6 689,629.4 694.9,633.1 700.3,636.5 705.8,639.4 711.6,636.2 716.4,633.4 723.1,637.6 729.1,623.4 735,625.6 740.4,617.0 746.5,616.1 752.3,603.3000000000001 758.1,608.8000000000001 764.1,614.6 769.8,619.2 775.3,625.5 780.5,623.8000000000001 786.4,626.3000000000001 791.5,630.8 797.3,608.6 803.7,599.5 808.3,588.4 813.8,589.3000000000001 820.1,595.8000000000001 825.6,599.5 831.1,604.4 837.1,609.9 842.9,614.4 848.4,623 854.2,597.5 860.2,604.4 865.7,615.5 871.2,611.3000000000001 877.2,595.3000000000001 882.7,602.0 888.1,604.0 894.3,610.8000000000001 900.4,606.6 905.3,593.5 911.3,594.9 916.8,595.3000000000001 922.2,598.9 928.3,588.4 934.1,589.5 939.8,577.8000000000001 945.4,574.2 951.1,562.2 956.8,566.8000000000001 963,559.4 968.1,558.4 973.9,558.4 979.7,562.8000000000001 985.4,558.0 991.3,538.2 996.7,539.6 1002.2,539.6 1007.7,544.4 1013.2,549.4 1018.6,553.7 1025.5,551.5 1030.3,534.8000000000001 1036.4,534.1 1041.9,531.4 1048.7,529.3000000000001" fill="none" stroke="#2e9a3c" stroke-width="1" stroke-linejoin="round" shape-rendering="geometricPrecision"/>
<polyline points="18.2,874.9 23.3,854.8 28.2,860.7 34.6,870.7 40.1,875.8 46.1,880.4 52.3,871.6 57.8,879.4 62.9,889.5 69.3,860.7 74.2,784.6 80.2,793.2 85.7,793.2 91.1,798.9 97.1,774.6 103,775.9 108.5,781.9 114.5,791 119.9,783.7 125.8,784.6 131.2,788.3 137.6,789.6 143.6,781.9 149.1,787.4 154.6,793.8 159.9,799.2 165.3,785.6 171.4,789.6 176.8,789.7 182.3,793.8 188.7,801 194.5,798.9 200.2,805.2 206.6,813.1 211.9,816.5 217.3,807.9 221.9,809.9 227.9,794.8 233.7,801.7 239.2,802.1 245.2,809.4 251,804.8 257.1,808.8 262.9,798.4 268.4,795.2 274.4,794.4 279.3,775.7 285.1,762 291.2,768.9 296.6,766.9 302.5,772 308.1,758 313.4,754.3 319.4,760.2 324.9,764.7 330.9,771.6 336.7,778 342.6,786.6 348.2,793 353.7,784.2 359,780.8 365,780.8 370.5,785.7 376.3,771.6 382.3,777.5 387.8,783 393.3,783 399.1,789.8 404.2,787.9 410.4,795.2 416.4,787.9 422.5,791.6 427.4,768.4 433.8,768.1 439.2,768.1 444.3,743.8 449.8,746.9 456,734.7 461.5,739.3 467.5,742.5 473.3,749.3 478.4,751.1 484.4,747.1 490.8,741.1 495.7,739.6 501.2,732.9 507.2,734.1 513.1,706.1 518.5,706.1 524.5,711.4 530,714.3 535.8,719.7 541.3,719.7 547.2,726.9 553.2,726.9 558.6,732.9 563.9,739.2 569.2,745.6 575,715.6 581.1,723.8 586.2,721.4 592.4,714.5 598.2,720 604.1,703.9 609.2,707.6 614.6,709.9 621,709.9 626.5,703.9 632,706.3 638,706.7 643.4,706.3 649.3,693.9 655.1,674.2 660.8,671.1 666.1,653.8 672.1,648.9 678.1,649.8 683.6,647 689,628.8 694.9,632.5 700.3,635.9 705.8,638.8 711.6,635.6 716.4,632.8 723.1,637 729.1,622.8 735,625 740.4,616.4 746.5,615.5 752.3,602.7 758.1,608.2 764.1,614 769.8,618.6 775.3,623.1 780.5,623.2 786.4,625.7 791.5,628.8 797.3,608 803.7,598.9 808.3,587.8 813.8,588.7 820.1,595.2 825.6,598.9 831.1,603.8 837.1,609.3 842.9,613.8 848.4,619.7 854.2,596.9 860.2,603.8 865.7,613.5 871.2,610.7 877.2,594.7 882.7,601.4 888.1,603.4 894.3,610.2 900.4,606 905.3,592.9 911.3,594.3 916.8,594.7 922.2,598.3 928.3,587.8 934.1,588.9 939.8,577.2 945.4,573.6 951.1,561.6 956.8,566.2 963,558.8 968.1,557.8 973.9,557.8 979.7,562.2 985.4,557.4 991.3,537.6 996.7,539 1002.2,539 1007.7,543.8 1013.2,548.8 1018.6,553.1 1025.5,550.9 1030.3,534.2 1036.4,533.5 1041.9,530.8 1048.7,528.7" fill="none" stroke="#0a0a66" stroke-width="2.1" stroke-linejoin="round" shape-rendering="geometricPrecision"/>
<g font-family="Liberation Sans, Arial, sans-serif" font-size="9.2px" fill="#000" shape-rendering="geometricPrecision">
<text x="1055.3" y="498.5">495</text><text x="1055.3" y="530.5">462</text><text x="1055.3" y="562.5">429</text><text x="1055.3" y="594.5">395</text><text x="1055.3" y="626.5">362</text><text x="1055.3" y="658.5">329</text><text x="1055.3" y="690.5">296</text><text x="1055.3" y="722.5">262</text><text x="1055.3" y="754.5">229</text><text x="1055.3" y="786.5">196</text><text x="1055.3" y="818.5">162</text><text x="1055.3" y="850.5">129</text><text x="1055.3" y="882.5">96</text><text x="1055.3" y="914.5">62</text>
<text x="18.6" y="922">0</text><text x="48.9" y="922" text-anchor="end">6</text><text x="80.9" y="922" text-anchor="end">12</text><text x="112.9" y="922" text-anchor="end">18</text><text x="144.9" y="922" text-anchor="end">23</text><text x="176.9" y="922" text-anchor="end">29</text><text x="208.9" y="922" text-anchor="end">34</text><text x="240.9" y="922" text-anchor="end">40</text><text x="272.9" y="922" text-anchor="end">46</text><text x="304.9" y="922" text-anchor="end">51</text><text x="336.9" y="922" text-anchor="end">57</text><text x="368.9" y="922" text-anchor="end">62</text><text x="400.9" y="922" text-anchor="end">68</text><text x="432.9" y="922" text-anchor="end">74</text><text x="464.9" y="922" text-anchor="end">79</text><text x="496.9" y="922" text-anchor="end">85</text><text x="528.9" y="922" text-anchor="end">90</text><text x="560.9" y="922" text-anchor="end">96</text><text x="592.9" y="922" text-anchor="end">102</text><text x="624.9" y="922" text-anchor="end">107</text><text x="656.9" y="922" text-anchor="end">113</text><text x="688.9" y="922" text-anchor="end">118</text><text x="720.9" y="922" text-anchor="end">124</text><text x="752.9" y="922" text-anchor="end">130</text><text x="784.9" y="922" text-anchor="end">135</text><text x="816.9" y="922" text-anchor="end">141</text><text x="848.9" y="922" text-anchor="end">146</text><text x="880.9" y="922" text-anchor="end">152</text><text x="912.9" y="922" text-anchor="end">158</text><text x="944.9" y="922" text-anchor="end">163</text><text x="976.9" y="922" text-anchor="end">169</text><text x="1008.9" y="922" text-anchor="end">175</text><text x="1040.9" y="922" text-anchor="end">180</text>
</g>
</svg>
<div id="eqtitle"><span class="c1">余额</span> / <span class="c2">净值</span> / 每个即时价格(基于所有可利用的最小时段的每一个价格的分形插值计算) / n/a</div>
<div id="lstrip"><div class="x">x</div><div class="vt">测试</div></div>
<div id="rstrip"></div>
<div id="btabs"><div class="bl"></div><div class="lo"></div><div class="act"></div>
<div class="t" style="left:12.8px">设置</div><div class="t" style="left:55.900000000000006px">结果</div><div class="t on" style="left:100.2px">净值图</div><div class="t" style="left:156.8px">报告</div><div class="t" style="left:201.1px">日志</div><div class="s" style="left:46.5px"></div><div class="s" style="left:190.5px"></div><div class="s" style="left:234.5px"></div>
</div>
</div>
</body></html>
